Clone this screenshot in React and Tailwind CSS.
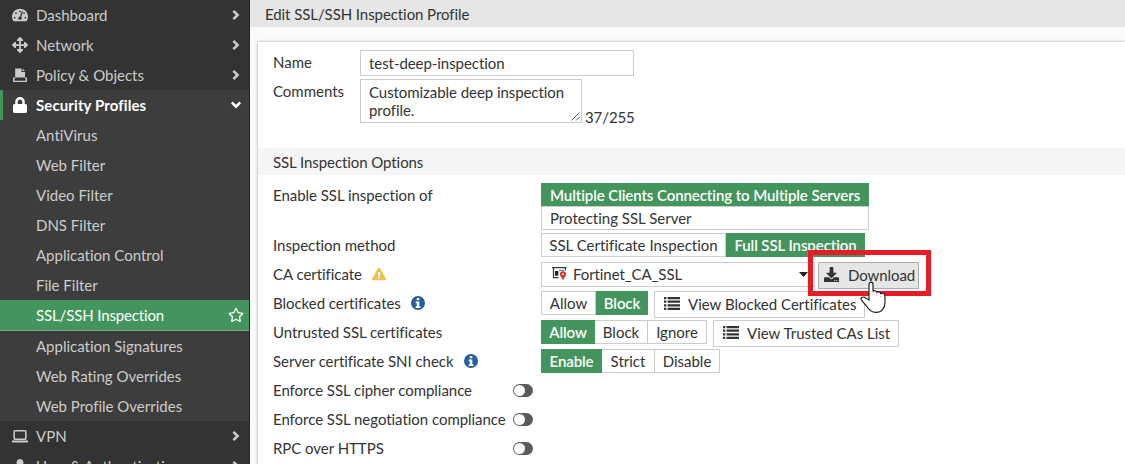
import React, { useState } from "react";
import {
  FaTachometerAlt,
  FaArrowsAlt,
  FaLock,
  FaUser,
  FaExclamationTriangle,
  FaDownload,
  FaRegStar,
} from "react-icons/fa";

const profileItems = [
  "AntiVirus",
  "Web Filter",
  "Video Filter",
  "DNS Filter",
  "Application Control",
  "File Filter",
  "SSL/SSH Inspection",
  "Application Signatures",
  "Web Rating Overrides",
  "Web Profile Overrides",
];

function Chevron({ down }) {
  return (
    <svg width="10" height="12" viewBox="0 0 10 12" className={down ? "rotate-90" : ""} fill="none" stroke="currentColor" strokeWidth="2.6">
      <path d="M2.4 1.8 6.600 6 2.4 10.2" />
    </svg>
  );
}

function PolicyIcon() {
  return (
    <svg width="14" height="15" viewBox="0 0 14 15" fill="currentColor">
      <path d="M2.2 0.5H8.500v3.500h3.500V9.500H2.2z" />
      <path d="M9.500 0.500 12 3H9.500z" />
      <path d="M2.200 10.200H.7v3.200h12.600v-3.200H12" fill="none" stroke="currentColor" strokeWidth="1.3" />
    </svg>
  );
}

function LaptopIcon() {
  return (
    <svg width="16" height="13" viewBox="0 0 16 13" fill="currentColor">
      <rect x="2.2" y="0.8" width="11.6" height="8.4" rx="0.8" fill="none" stroke="currentColor" strokeWidth="1.5" />
      <path d="M0 10.6h16v1.1q0 .9-1.2.9H1.2Q0 12.600 0 11.700z" />
    </svg>
  );
}

function ListIcon() {
  return (
    <svg width="16" height="13" viewBox="0 0 16 13" fill="currentColor" className="shrink-0">
      <path d="M0 0h2.300v2.200H0zM3.600 0H16v2.200H3.600zM0 3.600h2.300v2.200H0zM3.600 3.600H16v2.200H3.600zM0 7.200h2.300v2.200H0zM3.600 7.200H16v2.200H3.600zM0 10.800h2.300V13H0zM3.600 10.800H16V13H3.600z" />
    </svg>
  );
}

function InfoIcon() {
  return (
    <svg width="14" height="14" viewBox="0 0 14 14" className="ml-[10px] shrink-0">
      <circle cx="7" cy="7" r="7" fill="#25609c" />
      <path d="M5.800 2h2.500v2.200H5.800zM4.700 5.500h3.600v4.700h1.100V12H4.700v-1.800h1.100V7.300H4.700z" fill="#fff" />
    </svg>
  );
}

function CertIcon() {
  return (
    <svg width="15" height="14" viewBox="0 0 15 14" className="shrink-0">
      <path d="M0 .7h14.500M1.500 1v10.300M1 10.700h5.500M13.300 1v2.500" fill="none" stroke="#2c3e50" strokeWidth="1.2" />
      <path d="M3 4h3.300v4.700H3z" fill="#222" />
      <path d="M7 3.400h5" stroke="#666" strokeWidth="1" />
      <path d="M11 13.200C9.500 10.500 7.900 9 7.900 7.300a3.100 3.100 0 0 1 6.200 0c0 1.700-1.600 3.200-3.100 5.900z" fill="#cf352e" />
      <circle cx="11" cy="7.200" r="1" fill="#fff" />
    </svg>
  );
}

function HandCursor() {
  return (
    <svg width="26" height="34" viewBox="0 0 26 34" className="absolute left-[42px] top-[18px] z-20">
      <path
        d="M9 20V4.300C9 1.500 13 1.500 13 4.300V11.500C13.500 10.200 16.300 10.500 16.800 12.300C18 11.200 20.400 11.700 20.700 13.500C22.600 12.500 25 13.600 25 16V22C25 28.500 21.500 32.300 16 32.300C11 32.300 8.500 29.500 6.500 26L1.500 20.200C0 18 2.500 16.200 4.700 17.500Z"
        fill="#fff"
        stroke="#222"
        strokeWidth="1.200"
      />
      <path d="M13 12.500v4M16.800 13v3.500M20.700 14v3" stroke="#d88" strokeWidth="0.8" strokeDasharray="1 1" />
    </svg>
  );
}

function MenuRow({ icon, label, active }) {
  return (
    <div className={"flex h-[30px] shrink-0 items-center " + (active ? "bg-[#3d3d3d] border-l-[3px] border-[#43955d] pl-[9px] font-bold tracking-[0.1px] text-white" : "pl-3 text-[#cccccc]")}>
      <span className="flex w-4 justify-center text-base">{icon}</span>
      <span className="ml-2 flex-1 whitespace-nowrap">{label}</span>
      <span className="mr-2 flex w-[11px] justify-center">
        <Chevron down={active} />
      </span>
    </div>
  );
}

function Segmented({ options, widths, value }) {
  const [selected, setSelected] = useState(value);
  return (
    <div className="flex h-6">
      {options.map((o, i) => (
        <button
          key={o}
          onClick={() => setSelected(o)}
          style={{ width: widths[i] }}
          className={
            "h-6 whitespace-nowrap border text-center leading-[22px] " +
            (o === selected ? "border-[#43955d] bg-[#43955d] font-semibold tracking-[-0.08px] text-white" : "border-[#cccccc] bg-white") +
            (i > 0 && o !== selected ? " border-l-0" : "")
          }
        >
          {o}
        </button>
      ))}
    </div>
  );
}

function Row({ label, icon, children }) {
  return (
    <div className="flex h-[29px] items-start">
      <div className="flex h-6 w-[268px] shrink-0 items-center whitespace-nowrap tracking-[-0.04px]">
        {label}
        {icon}
      </div>
      {children}
    </div>
  );
}

function ToggleRow({ label }) {
  const [on, setOn] = useState(false);
  return (
    <div className="flex h-[29px] items-start">
      <div className="flex h-6 w-[240px] items-center whitespace-nowrap tracking-[-0.04px]">{label}</div>
      <button
        onClick={() => setOn(!on)}
        className={"mt-[6px] flex h-[13px] w-5 rounded-full bg-[#5b5b5b] p-px " + (on ? "justify-end" : "")}
      >
        <span className="h-[11px] w-[11px] rounded-full bg-white" />
      </button>
    </div>
  );
}

export default function App() {
  return (
    <div className="flex h-[464px] w-[1125px] overflow-hidden bg-[#fafafa] font-['Lato',sans-serif] text-[15px] leading-[18px] text-[#333333] [font-variant-ligatures:none]">
      <nav className="w-[250px] shrink-0 border-r border-[#242424] bg-[#333333]">
        <MenuRow icon={<FaTachometerAlt />} label="Dashboard" />
        <MenuRow icon={<FaArrowsAlt />} label="Network" />
        <MenuRow icon={<PolicyIcon />} label="Policy & Objects" />
        <MenuRow icon={<FaLock />} label="Security Profiles" active />
        <div className="bg-[#3d3d3d] text-[#cccccc]">
          {profileItems.map((item) =>
            item === "SSL/SSH Inspection" ? (
              <div key={item} className="flex h-[31px] items-center justify-between border-b border-[#7f9f88] bg-[#43955d] pl-9 pr-[5px] tracking-[-0.14px] text-white">
                {item}
                <FaRegStar className="text-base" />
              </div>
            ) : (
              <div key={item} className="flex h-[30px] items-center pl-9">
                {item}
              </div>
            )
          )}
        </div>
        <MenuRow icon={<LaptopIcon />} label="VPN" />
        <MenuRow icon={<FaUser className="text-sm" />} label="User & Authentication" />
      </nav>

      <main className="flex flex-1 flex-col">
        <header className="h-[27px] shrink-0 bg-[#e6e6e6] pl-[15px] pt-[5px] tracking-[-0.08px]">Edit SSL/SSH Inspection Profile</header>

        <section className="ml-2 mt-[15px] flex-1 bg-white shadow-[0_0_3px_rgba(0,0,0,0.35)]">
          <div className="h-[106px] pl-[15px] pt-2">
            <div className="flex">
              <label className="w-[87px] pt-[3px]">Name</label>
              <div className="h-[26px] w-[274px] border border-[#cccccc] pl-2 leading-[25px] tracking-[-0.06px]">test-deep-inspection</div>
            </div>
            <div className="mt-[3px] flex">
              <label className="w-[87px] pt-[3px]">Comments</label>
              <div className="relative h-11 w-[222px] border border-[#cccccc] pl-2 pt-[3px] tracking-[-0.06px]">
                Customizable deep inspection
                <br />
                profile.
                <svg width="9" height="9" viewBox="0 0 9 9" className="absolute bottom-px right-px" stroke="#666" strokeWidth="1">
                  <path d="M.5 8.500l8-8M5 8.500l3.500-3.500" />
                </svg>
              </div>
              <span className="ml-[3px] mt-[29px] tracking-[-0.1px]">37/255</span>
            </div>
          </div>

          <h2 className="h-[27px] bg-[#f5f5f5] pl-[15px] pt-[5px] tracking-[-0.08px]">SSL Inspection Options</h2>

          <div className="pl-[15px] pt-2">
            <div className="flex h-[50px]">
              <div className="flex h-6 w-[268px] items-center tracking-[-0.04px]">Enable SSL inspection of</div>
              <div className="w-[328px]">
                <div className="h-[23px] whitespace-nowrap bg-[#43955d] pl-[9px] font-semibold leading-[25px] tracking-[-0.08px] text-white">Multiple Clients Connecting to Multiple Servers</div>
                <div className="h-6 border border-[#cccccc] pl-2 leading-[23px]">Protecting SSL Server</div>
              </div>
            </div>
            <Row label="Inspection method">
              <Segmented options={["SSL Certificate Inspection", "Full SSL Inspection"]} widths={[185, 139]} value="Full SSL Inspection" />
            </Row>
            <Row label="CA certificate" icon={<FaExclamationTriangle className="ml-[10px] text-[14px] text-[#efc050]" />}>
              <div className="flex h-[25px] w-[274px] items-center border border-[#cccccc] pb-px pl-[10px] pr-[6px]">
                <CertIcon />
                <span className="ml-[6px] flex-1 tracking-[-0.08px]">Fortinet_CA_SSL</span>
                <svg width="9" height="5" viewBox="0 0 9 5" fill="#222">
                  <path d="M0 0h9L4.500 5z" />
                </svg>
              </div>
              <div className="relative ml-[3px]">
                <button className="flex h-[27px] w-[101px] items-center whitespace-nowrap border border-[#adadad] bg-[#e6e6e6] pb-[2px] pl-[5px]">
                  <FaDownload className="text-[15px]" />
                  <span className="ml-[9px] tracking-[-0.08px]">Download</span>
                </button>
                {/* callout around the download button */}
                <div className="absolute -left-[10px] -top-[12px] z-10 h-[46px] w-[123px] border-[5px] border-[#e81c25]" />
                <HandCursor />
              </div>
            </Row>
            <Row label="Blocked certificates" icon={<InfoIcon />}>
              <Segmented options={["Allow", "Block"]} widths={[55, 52]} value="Block" />
              <button className="ml-[6px] flex h-[27px] w-[211px] items-center whitespace-nowrap border border-[#cccccc] bg-white pb-[2px] pl-[9px]">
                <ListIcon />
                <span className="ml-2">View Blocked Certificates</span>
              </button>
            </Row>
            <Row label="Untrusted SSL certificates">
              <Segmented options={["Allow", "Block", "Ignore"]} widths={[54, 53, 59]} value="Allow" />
              <button className="ml-[6px] flex h-[27px] w-[186px] items-center whitespace-nowrap border border-[#cccccc] bg-white pb-[2px] pl-[9px]">
                <ListIcon />
                <span className="ml-2">View Trusted CAs List</span>
              </button>
            </Row>
            <Row label="Server certificate SNI check" icon={<InfoIcon />}>
              <Segmented options={["Enable", "Strict", "Disable"]} widths={[61, 53, 65]} value="Enable" />
            </Row>
            <ToggleRow label="Enforce SSL cipher compliance" />
            <ToggleRow label="Enforce SSL negotiation compliance" />
            <ToggleRow label="RPC over HTTPS" />
          </div>
        </section>
      </main>
    </div>
  );
}
